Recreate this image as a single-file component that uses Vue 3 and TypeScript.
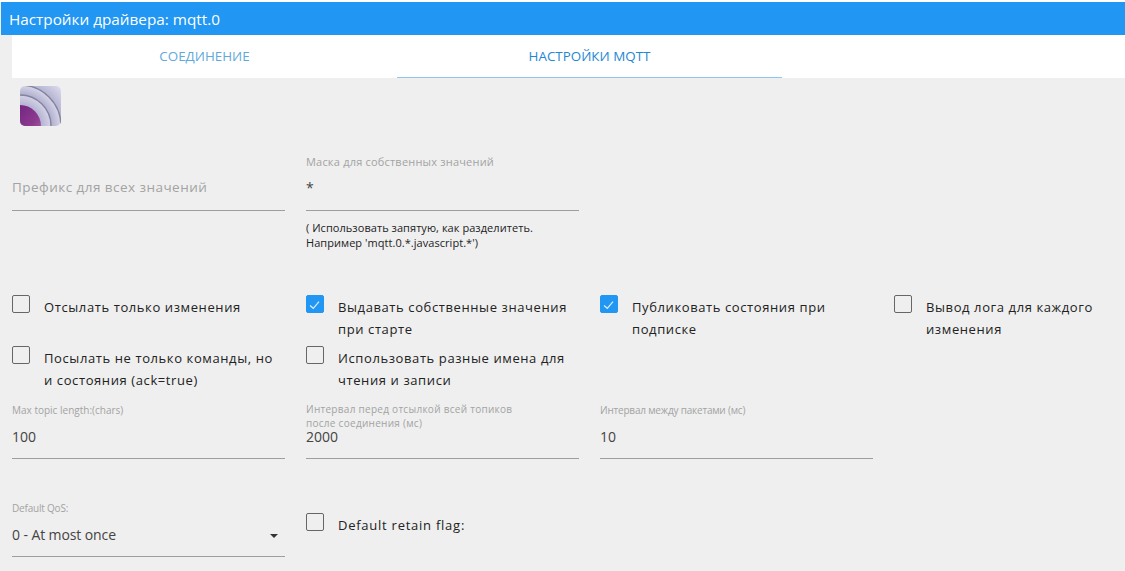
<script setup lang="ts">
interface Check { label: string; on?: boolean }
const row1: Check[] = [
  { label: 'Отсылать только изменения' },
  { label: 'Выдавать собственные значения при старте', on: true },
  { label: 'Публиковать состояния при подписке', on: true },
  { label: 'Вывод лога для каждого изменения' },
]
const row2: Check[] = [
  { label: 'Посылать не только команды, но и состояния (ack=true)' },
  { label: 'Использовать разные имена для чтения и записи' },
]
</script>

<template>
  <div class="page">
    <header class="title">Настройки драйвера: mqtt.0</header>
    <nav class="tabs">
      <div class="tab">СОЕДИНЕНИЕ</div>
      <div class="tab active">НАСТРОЙКИ MQTT</div>
    </nav>
    <main class="content">
      <svg class="logo" width="41" height="40" viewBox="0 0 41 40">
        <defs>
          <radialGradient id="bands" gradientUnits="userSpaceOnUse" cx="0" cy="40" r="58">
            <stop offset="0.36" stop-color="#b4b3d1" />
            <stop offset="0.525" stop-color="#d4d2e7" />
            <stop offset="0.53" stop-color="#aeadcc" />
            <stop offset="0.70" stop-color="#d6d4e8" />
            <stop offset="0.705" stop-color="#b4b3d1" />
            <stop offset="1" stop-color="#e2e0f1" />
          </radialGradient>
          <linearGradient id="pu" x1="0" y1="0.2" x2="1" y2="1">
            <stop offset="0" stop-color="#671a78" />
            <stop offset="0.6" stop-color="#8b3a8f" />
            <stop offset="1" stop-color="#b976ae" />
          </linearGradient>
          <clipPath id="clip"><rect width="41" height="40" rx="5" /></clipPath>
        </defs>
        <g clip-path="url(#clip)">
          <rect width="41" height="40" fill="url(#bands)" />
          <circle cx="0" cy="40" r="31" fill="none" stroke="#84849f" stroke-width="1.400" />
          <circle cx="0" cy="40" r="41" fill="none" stroke="#84849f" stroke-width="1.400" />
          <circle cx="0" cy="40" r="21" fill="url(#pu)" />
        </g>
      </svg>

      <section class="grid fields-top">
        <div class="field">
          <div class="placeholder">Префикс для всех значений</div>
        </div>
        <div class="field-wrap">
          <div class="field">
            <div class="small-label mask">Маска для собственных значений</div>
            <div class="value star">*</div>
          </div>
          <p class="help">( Использовать запятую, как разделитеть.<br />Например 'mqtt.0.*.javascript.*')</p>
        </div>
      </section>

      <section class="grid checks-one">
        <label v-for="c in row1" :key="c.label" class="check">
          <span class="box" :class="{ on: c.on }">
            <svg v-if="c.on" width="18" height="18" viewBox="0 0 18 18"><path d="M4 10.500L7.300 13.300L13 6.700" fill="none" stroke="#dcedfb" stroke-width="1.200" /></svg>
          </span>
          <span class="check-text">{{ c.label }}</span>
        </label>
      </section>

      <section class="grid checks-two">
        <label v-for="c in row2" :key="c.label" class="check">
          <span class="box"></span>
          <span class="check-text">{{ c.label }}</span>
        </label>
      </section>

      <section class="grid numbers">
        <div class="field">
          <div class="small-label">Max topic length:(chars)</div>
          <div class="value shifted">100</div>
        </div>
        <div class="field">
          <div class="small-label wide">Интервал перед отсылкой всей топиков<br />после соединения (мс)</div>
          <div class="value compact">2000</div>
        </div>
        <div class="field">
          <div class="small-label narrow">Интервал между пакетами (мс)</div>
          <div class="value shifted">10</div>
        </div>
      </section>

      <section class="grid bottom">
        <div class="field">
          <div class="small-label narrow">Default QoS:</div>
          <div class="value shifted select">0 - At most once<i class="caret"></i></div>
        </div>
        <label class="check retain">
          <span class="box"></span>
          <span class="check-text latin">Default retain flag:</span>
        </label>
      </section>
    </main>
  </div>
</template>

<style>
html, body { margin: 0; background: #efefef; }
</style>

<style scoped>
.page {
  width: 1125px;
  height: 571px;
  overflow: hidden;
  background: #efefef;
  font-family: "Open Sans", "Noto Sans", sans-serif;
  color: #222;
  box-sizing: border-box;
  border-top: 2px solid #fff;
}
.title {
  height: 33px;
  margin-left: 1px;
  padding-left: 8px;
  background: #2196f3;
  color: #fff;
  font-size: 15.300px;
  line-height: 35px;
  white-space: nowrap;
}
.tabs {
  display: flex;
  height: 43px;
  margin-left: 12px;
  background: #fff;
}
.tab {
  width: 385px;
  box-sizing: border-box;
  text-align: center;
  font-size: 13.400px;
  line-height: 43px;
  color: #5fa9dc;
}
.tab.active {
  color: #1e88d2;
  border-bottom: 1px solid #8fc7ee;
}
.content {
  padding-left: 12px;
}
.logo {
  display: block;
  margin: 8px 0 0 8px;
}
.grid {
  display: grid;
  grid-template-columns: repeat(4, 273px);
  column-gap: 21px;
}
.fields-top {
  margin-top: 26px;
  height: 143px;
  align-items: start;
}
.field {
  position: relative;
  height: 59px;
  box-sizing: border-box;
  border-bottom: 1px solid #9e9e9e;
}
.placeholder {
  padding-top: 25px;
  font-size: 13.500px;
  line-height: 20px;
  letter-spacing: 0.46px;
  color: #a3a3a3;
}
.small-label {
  box-sizing: border-box;
  height: 23px;
  padding-top: 3px;
  font-size: 10px;
  line-height: 14px;
  color: #a3a3a3;
  white-space: nowrap;
}
.small-label.mask {
  font-size: 11px;
  letter-spacing: 0.2px;
}
.small-label.wide {
  height: 30px;
  padding-top: 2px;
  letter-spacing: 0.28px;
}
.small-label.narrow { letter-spacing: -0.2px; }
.value {
  font-size: 14px;
  line-height: 24px;
  color: #444;
}
.star { padding-top: 1px; }
.shifted { padding-top: 2px; }
.compact { line-height: 14px; }
.help {
  margin: 9px 0 0;
  font-size: 11px;
  letter-spacing: 0.05px;
  line-height: 15px;
  color: #222;
}
.checks-one { height: 51px; }
.checks-two { height: 46px; }
.check {
  display: flex;
  align-items: flex-start;
  column-gap: 14px;
}
.box {
  flex: none;
  width: 18px;
  height: 18px;
  box-sizing: border-box;
  border: 1px solid #666;
  border-radius: 2px;
}
.box.on {
  background: #2196f3;
  border-color: #2196f3;
}
.box.on svg {
  display: block;
  margin: -1px;
}
.check-text {
  padding-top: 1px;
  padding-right: 8px;
  font-size: 13px;
  line-height: 22px;
  letter-spacing: 0.6px;
  color: #222;
}
.check-text.latin { letter-spacing: 0.75px; }
.numbers { height: 106px; align-items: start; }
.numbers .field { margin-top: 8px; }
.select { position: relative; letter-spacing: -0.1px; }
.caret {
  position: absolute;
  right: 7px;
  top: 13px;
  border-left: 4px solid transparent;
  border-right: 4px solid transparent;
  border-top: 4px solid #333;
}
.bottom { align-items: start; }
.retain { margin-top: 15px; }
</style>
